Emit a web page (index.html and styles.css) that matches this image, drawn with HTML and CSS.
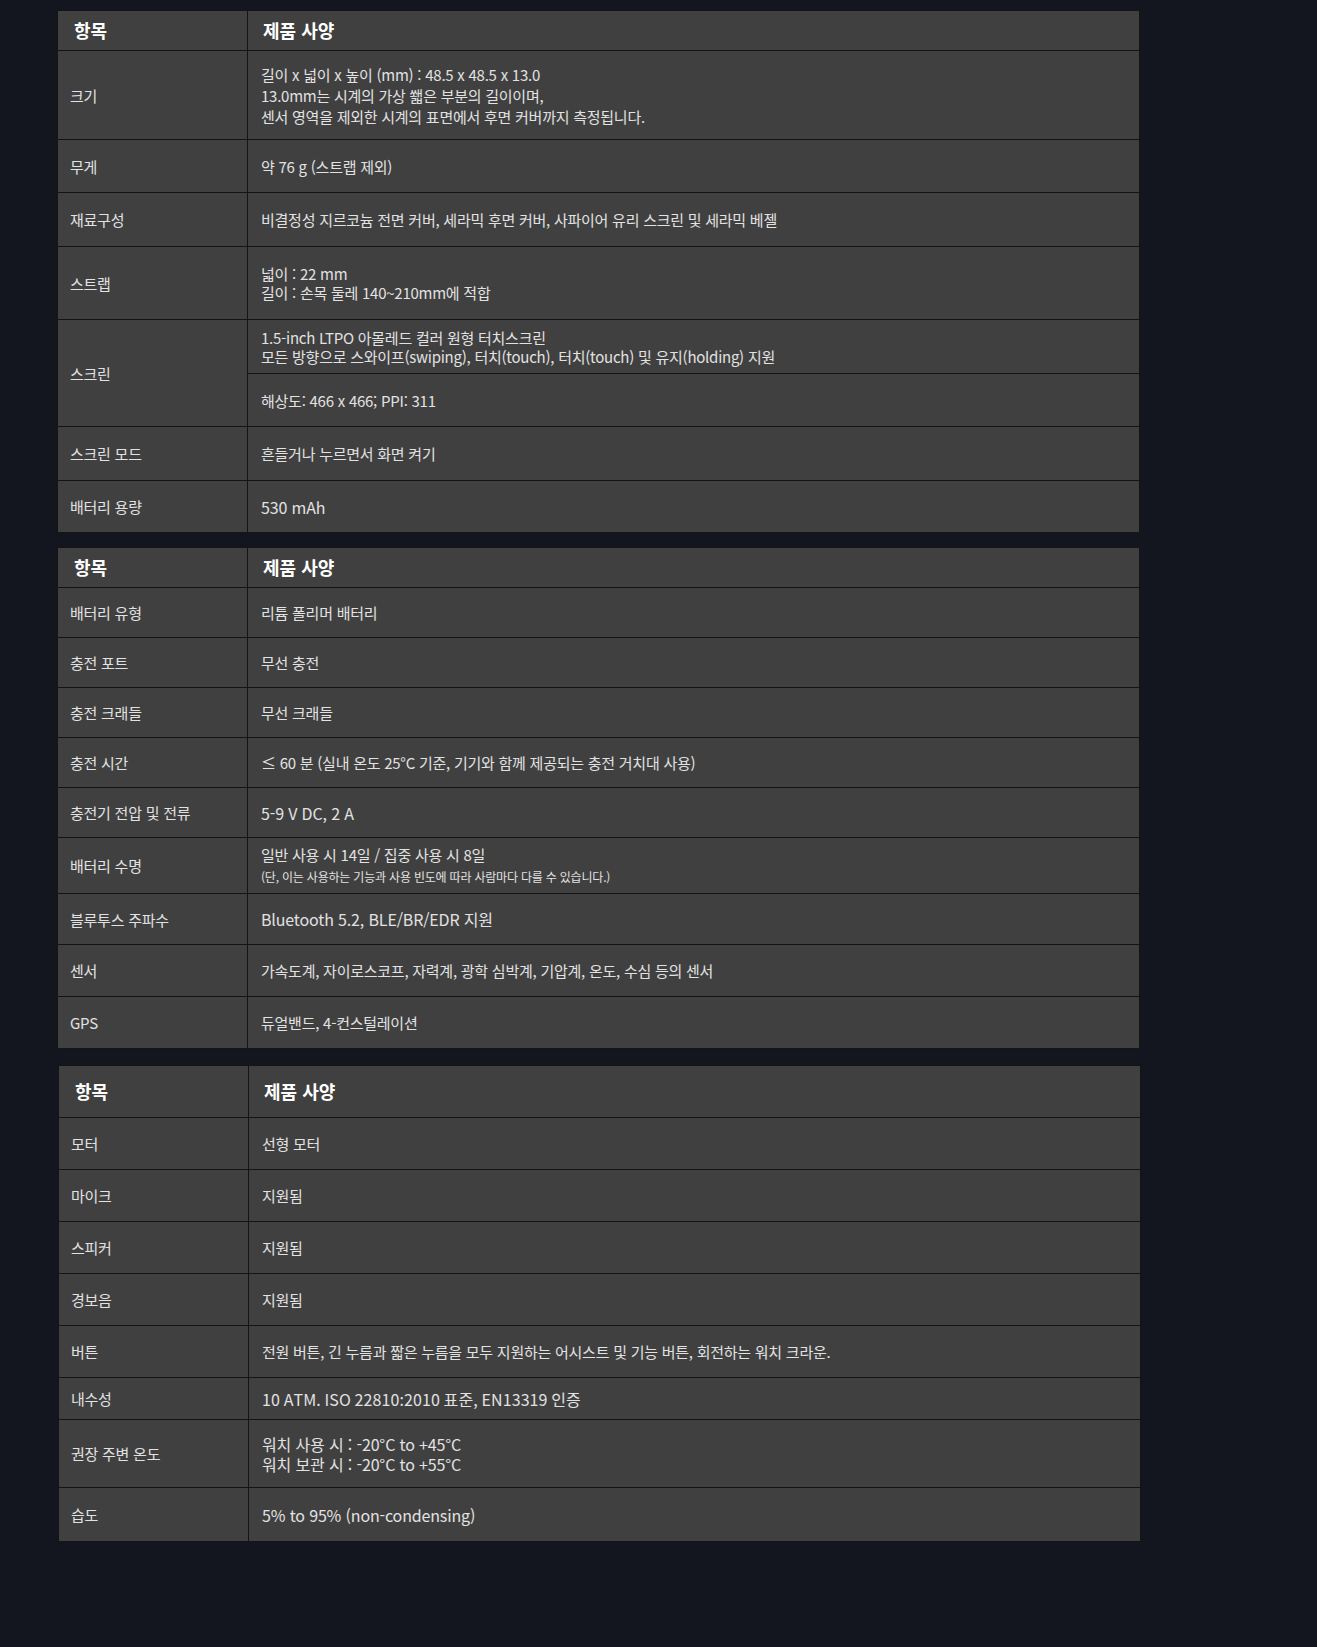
FILE: index.html
```html
<!DOCTYPE html>
<html lang="ko">
<head>
<meta charset="utf-8">
<title>제품 사양</title>
<link rel="stylesheet" href="styles.css">
</head>
<body>
<main class="specs">
  <table class="spec t1">
    <thead>
      <tr class="head"><th class="c1">항목</th><th>제품 사양</th></tr>
    </thead>
    <tbody>
      <tr class="h89"><td class="c1">크기</td><td class="lh21">길이 x 넓이 x 높이 (mm) : 48.5 x 48.5 x 13.0<br>13.0mm는 시계의 가상 쐛은 부분의 길이이며,<br>센서 영역을 제외한 시계의 표면에서 후면 커버까지 측정됩니다.</td></tr>
      <tr class="h53"><td class="c1">무게</td><td>약 76 g (스트랩 제외)</td></tr>
      <tr class="h54"><td class="c1">재료구성</td><td>비결정성 지르코늄 전면 커버, 세라믹 후면 커버, 사파이어 유리 스크린 및 세라믹 베젤</td></tr>
      <tr class="h73"><td class="c1">스트랩</td><td>넓이 : 22 mm<br>길이 : 손목 둘레 140~210mm에 적합</td></tr>
      <tr class="h54"><td class="c1" rowspan="2">스크린</td><td>1.5-inch LTPO 아몰레드 컬러 원형 터치스크린<br>모든 방향으로 스와이프(swiping), 터치(touch), 터치(touch) 및 유지(holding) 지원</td></tr>
      <tr class="h53"><td>해상도: 466 x 466; PPI: 311</td></tr>
      <tr class="h54"><td class="c1">스크린 모드</td><td>흔들거나 누르면서 화면 켜기</td></tr>
      <tr class="h52"><td class="c1">배터리 용량</td><td class="big">530 mAh</td></tr>
    </tbody>
  </table>

  <table class="spec t2">
    <thead>
      <tr class="head"><th class="c1">항목</th><th>제품 사양</th></tr>
    </thead>
    <tbody>
      <tr><td class="c1">배터리 유형</td><td>리튬 폴리머 배터리</td></tr>
      <tr><td class="c1">충전 포트</td><td>무선 충전</td></tr>
      <tr><td class="c1">충전 크래들</td><td>무선 크래들</td></tr>
      <tr><td class="c1">충전 시간</td><td>≤ 60 분 (실내 온도 25°C 기준, 기기와 함께 제공되는 충전 거치대 사용)</td></tr>
      <tr><td class="c1">충전기 전압 및 전류</td><td class="big">5-9 V DC, 2 A</td></tr>
      <tr class="h56"><td class="c1">배터리 수명</td><td class="lh21">일반 사용 시 14일 / 집중 사용 시 8일<br><span class="note">(단, 이는 사용하는 기능과 사용 빈도에 따라 사람마다 다를 수 있습니다.)</span></td></tr>
      <tr class="h51"><td class="c1">블루투스 주파수</td><td class="big">Bluetooth 5.2, BLE/BR/EDR 지원</td></tr>
      <tr class="h52"><td class="c1">센서</td><td>가속도계, 자이로스코프, 자력계, 광학 심박계, 기압계, 온도, 수심 등의 센서</td></tr>
      <tr class="h52"><td class="c1">GPS</td><td>듀얼밴드, 4-컨스털레이션</td></tr>
    </tbody>
  </table>

  <table class="spec t3">
    <thead>
      <tr class="head"><th class="c1">항목</th><th>제품 사양</th></tr>
    </thead>
    <tbody>
      <tr><td class="c1">모터</td><td>선형 모터</td></tr>
      <tr><td class="c1">마이크</td><td>지원됨</td></tr>
      <tr><td class="c1">스피커</td><td>지원됨</td></tr>
      <tr><td class="c1">경보음</td><td>지원됨</td></tr>
      <tr><td class="c1">버튼</td><td>전원 버튼, 긴 누름과 짧은 누름을 모두 지원하는 어시스트 및 기능 버튼, 회전하는 워치 크라운.</td></tr>
      <tr class="h42"><td class="c1">내수성</td><td class="big wide">10 ATM. ISO 22810:2010 표준, EN13319 인증</td></tr>
      <tr class="h68"><td class="c1">권장 주변 온도</td><td class="big lh20">워치 사용 시 : -20°C to +45°C<br>워치 보관 시 : -20°C to +55°C</td></tr>
      <tr class="h54"><td class="c1">습도</td><td class="big">5% to 95% (non-condensing)</td></tr>
    </tbody>
  </table>
</main>
</body>
</html>
```

FILE: styles.css
```css
html, body {
  margin: 0;
  padding: 0;
  background: #13161e;
}

body {
  font-family: "Noto Sans CJK KR", "Noto Sans", sans-serif;
  color: #e2e2e2;
  min-height: 1647px;
}

.specs {
  padding: 10px 0 0 57px;
}

.spec {
  width: 1083px;
  border-collapse: collapse;
  background: #404040;
  table-layout: fixed;
}

.spec + .spec {
  margin-top: 14px;
}

.spec.t3 {
  margin-top: 16px;
  margin-left: 1px;
}

.spec th,
.spec td {
  border: 1px solid #141414;
  text-align: left;
  vertical-align: middle;
  padding: 0 13px;
  font-size: 15px;
  line-height: 19px;
  letter-spacing: -0.25px;
  font-weight: 400;
}

.spec th {
  color: #ffffff;
  font-weight: 700;
  font-size: 18px;
  letter-spacing: 0;
  padding: 0 15px;
}

.spec th.c1 {
  padding-left: 16px;
}

.spec .c1 {
  width: 190px;
  box-sizing: border-box;
  padding-left: 12px;
}

.spec tr { height: 50px; }
.t1 tr { height: 54px; }
.t3 tr { height: 52px; }
.t1 .head, .t2 .head { height: 40px; }
.t3 .head { height: 52px; }

.spec .h89 { height: 89px; }
.spec .h73 { height: 73px; }
.spec .h68 { height: 68px; }
.spec .h56 { height: 56px; }
.spec .h54 { height: 54px; }
.spec .h53 { height: 53px; }
.spec .h52 { height: 52px; }
.spec .h51 { height: 51px; }
.spec .h42 { height: 42px; }

.spec td.lh21 { line-height: 21px; }

.spec td.big {
  font-size: 16px;
  line-height: 20px;
  letter-spacing: -0.15px;
}

.spec td.wide {
  letter-spacing: 0.1px;
  font-feature-settings: "calt" 0, "case" 0, "locl" 0;
  font-kerning: none;
}

.spec td.lh20 { line-height: 20px; }

.spec .note {
  font-size: 12px;
  letter-spacing: -0.2px;
}
```
